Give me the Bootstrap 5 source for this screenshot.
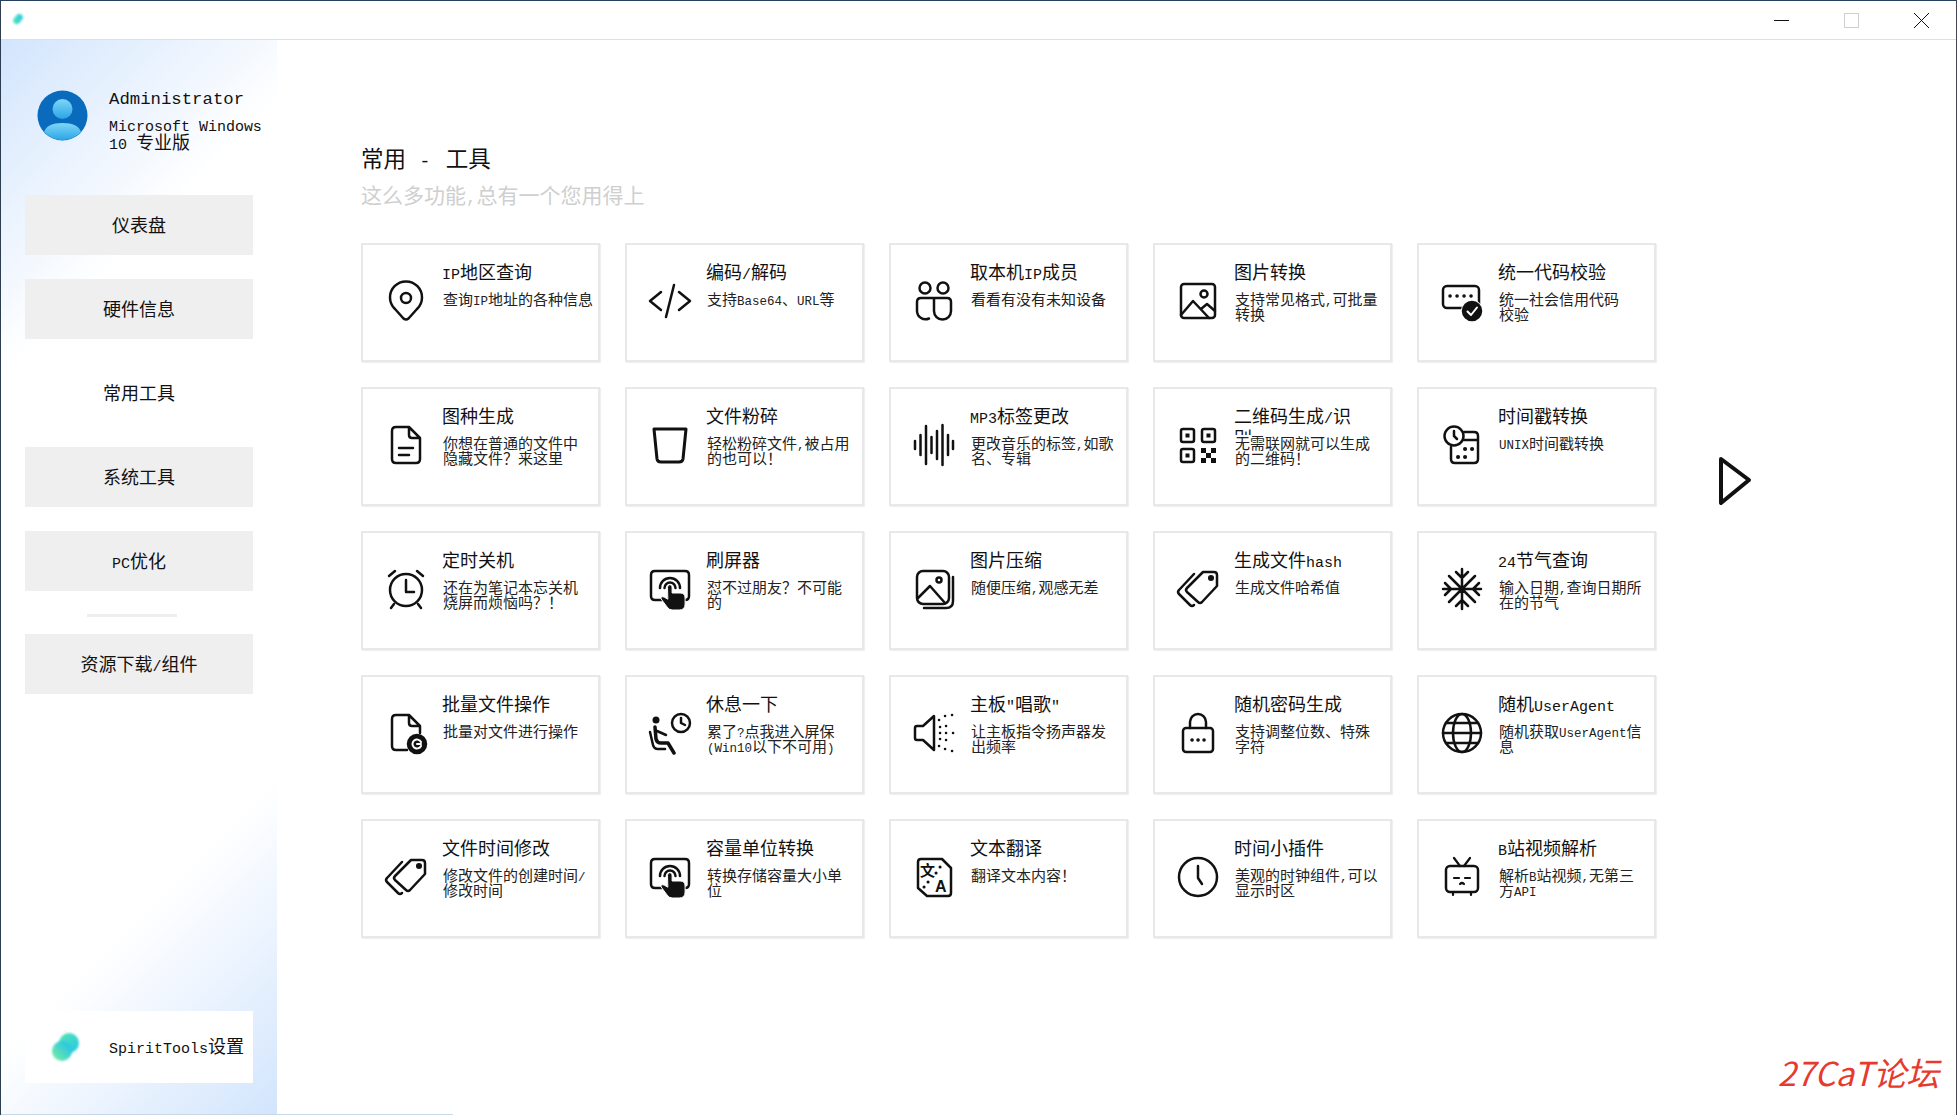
<!DOCTYPE html>
<html lang="zh">
<head>
<meta charset="utf-8">
<title>SpiritTools</title>
<link href="https://cdn.jsdelivr.net/npm/bootstrap@5.3.0/dist/css/bootstrap.min.css" rel="stylesheet">
<style>
html,body{height:1115px;overflow:hidden;background:#fff}
body{font-family:"Noto Sans CJK SC","Liberation Sans",sans-serif;color:#111}
.lat{font-family:"Liberation Mono","Noto Sans CJK SC",monospace;font-size:.833em;line-height:0}
.app-win{height:1115px;border-top:1px solid #24405f;border-left:1px solid #2c3e50;border-right:1px solid #445;position:relative}
.title-strip{height:39px;border-bottom:1px solid #dcdfe4;flex:none}
.strip-logo{margin:11px 0 0 10px}
.win-btn{width:15px;height:15px;display:block}
.win-set{margin:12px 27px 0 0;gap:55px}
.body-row{height:1075px}
.side{width:276px;flex:none;padding:50px 24px 32px;background:linear-gradient(135deg,#d2e5fd 0%,#ffffff 25%,#ffffff 75%,#d2e5fd 100%)}
.profile{height:105px;padding-left:12px;gap:21px}
.profile-name{font-size:20.8px;line-height:22px;margin-top:-6px}
.profile-os{font-size:18px;line-height:18px;margin-top:8px;width:160px}
.side-btn{height:60px;width:228px;border:0;padding:0;background:#efefef;font-size:18px;color:#111;line-height:58px}
.side-btn+.side-btn{margin-top:24px}
.side-btn.on{background:#fff}
.side-rule{width:90px;height:3px;background:#eeeeee;margin:23px 0 17px 62px}
.side-cog{height:72px;width:228px;background:#fff;font-size:18px;margin-top:auto;padding-left:24px;gap:26px}
.cog-label{padding-bottom:4px}
.main-area{padding:102px 0 0 84px}
.page-h{font-size:22.5px;line-height:30px;color:#111;margin:0;white-space:pre;font-weight:400}
.page-h .lat{letter-spacing:2px}
.page-sub{font-size:21px;line-height:28px;color:#cfcfcf;margin:8px 0 35px}
.tool-grid{display:grid;grid-template-columns:repeat(5,239px);grid-auto-rows:119px;gap:25px}
.tool{border:2px solid #e8e8e8;background:#fff;box-shadow:1px 1px 1px #f0f0f0}
.tool-ico{width:44px;height:44px;flex:none;margin:34px 0 0 21px;fill:none;stroke:#111;stroke-width:2.5;stroke-linecap:round;stroke-linejoin:round}
.tool-txt{margin-left:14px;padding-top:15px;min-width:0;flex:1}
.tool-name{font-size:18px;line-height:22px;height:22px;color:#111;white-space:nowrap}
.tool-name.clip-two{height:31px;overflow:hidden;margin-bottom:-9px}
.tool-desc{font-size:15px;line-height:15px;margin-top:9px;padding-left:1px;color:#222;white-space:nowrap}
.next-arrow{margin:213px 0 0 62px;flex:none}
.wm{position:absolute;right:17px;bottom:25px;font-size:33px;line-height:36px;color:#e8392f;font-style:italic}
.bot-line{position:absolute;left:0;bottom:0;width:452px;height:1px;background:#c9d6e4}
</style>
</head>
<body>
<svg width="0" height="0" class="d-block" aria-hidden="true">
<defs>
<linearGradient id="lg1" x1="0" y1="1" x2="1" y2="0"><stop offset="0" stop-color="#7df09a"/><stop offset="1" stop-color="#16bdf5"/></linearGradient>
<linearGradient id="lg2" x1="0" y1="0" x2="1" y2="1"><stop offset="0" stop-color="#55e6b4"/><stop offset="1" stop-color="#25c6e8"/></linearGradient>
<linearGradient id="av" x1="0" y1="0" x2="0" y2="1"><stop offset="0" stop-color="#7fd6f8"/><stop offset="1" stop-color="#2aa5e6"/></linearGradient>
<filter id="soft" x="-30%" y="-30%" width="160%" height="160%"><feGaussianBlur stdDeviation="1"/></filter>
<symbol id="i-tap" viewBox="0 0 44 44">
<path d="M14 33H7Q3 33 3 29V8Q3 4 7 4H37Q41 4 41 8V29Q41 33 37 33"/>
<path d="M12 21A10 10 0 0 1 32 21M16.500 21A5.500 5.500 0 0 1 27.500 21"/>
<path fill="#111" stroke="#fff" stroke-width="1" d="M19.500 20a2.300 2.300 0 0 1 4.600 0v6h8q5 0 5 5v6q0 6-6 6h-7q-3 0-5-3l-6-8q-1-3 3-2l3.400 2z"/>
</symbol>
<symbol id="i-tag" viewBox="0 0 44 44">
<path d="M27 5H38Q41 5 41 8V19L26 35Q24 37 22 35L11 25Q9 23 11 21Z"/>
<path d="M18 7L3 23Q1 25 3 27L14 38Q16 40 18 38"/>
<circle cx="35" cy="11" r="1.800" fill="#111"/>
</symbol>
</defs>
</svg>

<div class="app-win d-flex flex-column">
  <div class="title-strip d-flex justify-content-between">
    <svg class="strip-logo" width="14" height="14" viewBox="0 0 14 14"><rect x="1.500" y="3.500" width="11" height="7" rx="3.500" fill="url(#lg2)" transform="rotate(-50 7 7)" filter="url(#soft)"/></svg>
    <div class="d-flex win-set">
      <svg class="win-btn" viewBox="0 0 15 15"><path d="M0 7.500H15" stroke="#111" fill="none"/></svg>
      <svg class="win-btn" viewBox="0 0 15 15"><rect x=".5" y=".5" width="14" height="14" stroke="#cfcfcf" fill="none"/></svg>
      <svg class="win-btn" viewBox="0 0 15 15"><path d="M0 0L15 15M15 0L0 15" stroke="#111" fill="none"/></svg>
    </div>
  </div>
  <div class="body-row d-flex">
    <aside class="side d-flex flex-column">
      <div class="profile d-flex align-items-start flex-none">
        <svg width="51" height="51" viewBox="0 0 51 51" class="flex-shrink-0">
          <circle cx="25.500" cy="25.500" r="25" fill="#0a6bbd"/>
          <circle cx="25.500" cy="19" r="10" fill="url(#av)"/>
          <path d="M7 42Q10 33 25.500 33Q41 33 44 42A25 25 0 0 1 7 42Z" fill="url(#av)"/>
        </svg>
        <div>
          <div class="profile-name"><span class="lat">Administrator</span></div>
          <div class="profile-os"><span class="lat">Microsoft Windows</span><br><span class="lat">10 </span>专业版</div>
        </div>
      </div>
      <div class="btn rounded-0 side-btn">仪表盘</div>
      <div class="btn rounded-0 side-btn">硬件信息</div>
      <div class="btn rounded-0 side-btn on">常用工具</div>
      <div class="btn rounded-0 side-btn">系统工具</div>
      <div class="btn rounded-0 side-btn"><span class="lat">PC</span>优化</div>
      <div class="side-rule"></div>
      <div class="btn rounded-0 side-btn">资源下载<span class="lat">/</span>组件</div>
      <div class="side-cog d-flex align-items-center">
        <svg width="34" height="34" viewBox="0 0 34 34" class="flex-shrink-0">
          <circle cx="20" cy="13" r="10" fill="url(#lg2)" filter="url(#soft)"/>
          <circle cx="13" cy="21" r="10" fill="url(#lg1)" filter="url(#soft)"/>
        </svg>
        <span class="cog-label"><span class="lat">SpiritTools</span>设置</span>
      </div>
    </aside>
    <main class="main-area flex-grow-1">
      <h1 class="page-h">常用<span class="lat"> - </span>工具</h1>
      <p class="page-sub">这么多功能<span class="lat">,</span>总有一个您用得上</p>
      <div class="d-flex">
        <div class="tool-grid">

          <div class="card rounded-0 flex-row tool">
            <svg class="tool-ico" viewBox="0 0 44 44"><path d="M19.500 39.500L11 30A16 16 0 1 1 33 30L24.500 39.500Q22 41.500 19.500 39.500Z"/><circle cx="22" cy="19" r="5"/></svg>
            <div class="tool-txt"><div class="tool-name"><span class="lat">IP</span>地区查询</div><div class="tool-desc">查询<span class="lat">IP</span>地址的各种信息</div></div>
          </div>
          <div class="card rounded-0 flex-row tool">
            <svg class="tool-ico" viewBox="0 0 44 44"><path d="M13 13L2 22L13 31M31 13L42 22L31 31M26 6L18 38"/></svg>
            <div class="tool-txt"><div class="tool-name">编码<span class="lat">/</span>解码</div><div class="tool-desc">支持<span class="lat">Base64</span>、<span class="lat">URL</span>等</div></div>
          </div>
          <div class="card rounded-0 flex-row tool">
            <svg class="tool-ico" viewBox="0 0 44 44"><circle cx="13" cy="9" r="5.500"/><circle cx="31" cy="9" r="5.500"/><path d="M21 19H9Q5 19 5 23V32A8.500 8.500 0 0 0 17 39.500"/><path d="M22 19H35Q39 19 39 23V32A8.500 8.500 0 0 1 22 32Z"/></svg>
            <div class="tool-txt"><div class="tool-name">取本机<span class="lat">IP</span>成员</div><div class="tool-desc">看看有没有未知设备</div></div>
          </div>
          <div class="card rounded-0 flex-row tool">
            <svg class="tool-ico" viewBox="0 0 44 44"><rect x="5" y="5" width="34" height="34" rx="3"/><circle cx="28" cy="15" r="3.500"/><path d="M5 36L17 22L33 39M25 30L31 25L39 32"/></svg>
            <div class="tool-txt"><div class="tool-name">图片转换</div><div class="tool-desc">支持常见格式<span class="lat">,</span>可批量<br>转换</div></div>
          </div>
          <div class="card rounded-0 flex-row tool">
            <svg class="tool-ico" viewBox="0 0 44 44"><rect x="3" y="7" width="36" height="22" rx="4"/><path d="M10 17h.1M17 17h.1M24 17h.1M31 17h.1" stroke-width="3.500"/><circle cx="32" cy="32" r="11" fill="#fff" stroke="none"/><circle cx="32" cy="32" r="9" fill="#111"/><path d="M27.500 32.500L31 36L37 28.500" stroke="#fff" stroke-width="2"/></svg>
            <div class="tool-txt"><div class="tool-name">统一代码校验</div><div class="tool-desc">统一社会信用代码<br>校验</div></div>
          </div>

          <div class="card rounded-0 flex-row tool">
            <svg class="tool-ico" viewBox="0 0 44 44"><path d="M25 4H12Q8 4 8 8V36Q8 40 12 40H32Q36 40 36 36V15ZM25 4V12Q25 15 28 15H36M15 25H29M15 32H25"/></svg>
            <div class="tool-txt"><div class="tool-name">图种生成</div><div class="tool-desc">你想在普通的文件中<br>隐藏文件？来这里</div></div>
          </div>
          <div class="card rounded-0 flex-row tool">
            <svg class="tool-ico" viewBox="0 0 44 44"><path d="M6 6H38L35 36Q34.500 39 31 39H13Q9.500 39 9 36Z" stroke-width="3"/></svg>
            <div class="tool-txt"><div class="tool-name">文件粉碎</div><div class="tool-desc">轻松粉碎文件<span class="lat">,</span>被占用<br>的也可以！</div></div>
          </div>
          <div class="card rounded-0 flex-row tool">
            <svg class="tool-ico" viewBox="0 0 44 44"><path d="M3 18V26M8.500 12V32M14 3V41M19.500 14V30M25 8V36M30.500 2V42M36 12V32M41 18V26"/></svg>
            <div class="tool-txt"><div class="tool-name"><span class="lat">MP3</span>标签更改</div><div class="tool-desc">更改音乐的标签<span class="lat">,</span>如歌<br>名、专辑</div></div>
          </div>
          <div class="card rounded-0 flex-row tool">
            <svg class="tool-ico" viewBox="0 0 44 44"><rect x="5" y="6" width="13" height="13" rx="2"/><rect x="26" y="6" width="13" height="13" rx="2"/><rect x="5" y="26" width="13" height="13" rx="2"/><g fill="#111" stroke="none"><rect x="9.500" y="10.500" width="4" height="4"/><rect x="30.500" y="10.500" width="4" height="4"/><rect x="9.500" y="30.500" width="4" height="4"/><rect x="25" y="25" width="5" height="5"/><rect x="35" y="25" width="5" height="5"/><rect x="30" y="30" width="5" height="5"/><rect x="25" y="35" width="5" height="5"/><rect x="35" y="35" width="5" height="5"/></g></svg>
            <div class="tool-txt"><div class="tool-name clip-two">二维码生成<span class="lat">/</span>识<br>别</div><div class="tool-desc">无需联网就可以生成<br>的二维码！</div></div>
          </div>
          <div class="card rounded-0 flex-row tool">
            <svg class="tool-ico" viewBox="0 0 44 44"><circle cx="14" cy="13" r="9.500"/><path d="M14 8V13L17 16"/><path d="M24 9H34Q38 9 38 13V36Q38 40 34 40H15Q11 40 11 36V24M24 17H38"/><path d="M25 26h.1M32 26h.1M18 34h.1M25 34h.1" stroke-width="4"/></svg>
            <div class="tool-txt"><div class="tool-name">时间戳转换</div><div class="tool-desc"><span class="lat">UNIX</span>时间戳转换</div></div>
          </div>

          <div class="card rounded-0 flex-row tool">
            <svg class="tool-ico" viewBox="0 0 44 44"><circle cx="22" cy="23" r="16"/><path d="M22 13V25H30M5 9L11 4M39 9L33 4M10 37L7 41M34 37L37 41"/></svg>
            <div class="tool-txt"><div class="tool-name">定时关机</div><div class="tool-desc">还在为笔记本忘关机<br>烧屏而烦恼吗？！</div></div>
          </div>
          <div class="card rounded-0 flex-row tool">
            <svg class="tool-ico"><use href="#i-tap"/></svg>
            <div class="tool-txt"><div class="tool-name">刷屏器</div><div class="tool-desc">怼不过朋友？不可能<br>的</div></div>
          </div>
          <div class="card rounded-0 flex-row tool">
            <svg class="tool-ico" viewBox="0 0 44 44"><rect x="5" y="4" width="32" height="33" rx="6"/><path d="M41 10V34Q41 41 34 41H12"/><circle cx="27" cy="13" r="2.500"/><path d="M6 31L18 19L33 36"/></svg>
            <div class="tool-txt"><div class="tool-name">图片压缩</div><div class="tool-desc">随便压缩<span class="lat">,</span>观感无差</div></div>
          </div>
          <div class="card rounded-0 flex-row tool">
            <svg class="tool-ico"><use href="#i-tag"/></svg>
            <div class="tool-txt"><div class="tool-name">生成文件<span class="lat">hash</span></div><div class="tool-desc">生成文件哈希值</div></div>
          </div>
          <div class="card rounded-0 flex-row tool">
            <svg class="tool-ico" viewBox="0 0 44 44"><path d="M22 2V42M3 22H41M9 9L35 35M35 9L9 35M16 5L22 11L28 5M16 39L22 33L28 39M5 16L11 22L5 28M39 16L33 22L39 28"/></svg>
            <div class="tool-txt"><div class="tool-name"><span class="lat">24</span>节气查询</div><div class="tool-desc">输入日期<span class="lat">,</span>查询日期所<br>在的节气</div></div>
          </div>

          <div class="card rounded-0 flex-row tool">
            <svg class="tool-ico" viewBox="0 0 44 44"><path d="M23 39H12Q8 39 8 35V8Q8 4 12 4H25L36 15V22M25 4V12Q25 15 28 15H36"/><circle cx="33" cy="33" r="9" fill="#111"/><path d="M37 31A4.500 4.500 0 1 0 37 35M33 33H37" stroke="#fff" stroke-width="2"/></svg>
            <div class="tool-txt"><div class="tool-name">批量文件操作</div><div class="tool-desc">批量对文件进行操作</div></div>
          </div>
          <div class="card rounded-0 flex-row tool">
            <svg class="tool-ico" viewBox="0 0 44 44"><circle cx="8" cy="9" r="3.500" fill="#111" stroke="none"/><path d="M7 16L8 28Q9 32 13 32H20L26 42" stroke-width="3.500"/><path d="M2 21L5 34Q6 38 10 38H17M9 20L18 24"/><circle cx="33" cy="12" r="9"/><path d="M33 7V12L37 14"/></svg>
            <div class="tool-txt"><div class="tool-name">休息一下</div><div class="tool-desc">累了<span class="lat">?</span>点我进入屏保<br><span class="lat">(Win10</span>以下不可用<span class="lat">)</span></div></div>
          </div>
          <div class="card rounded-0 flex-row tool">
            <svg class="tool-ico" viewBox="0 0 44 44"><path d="M3 17Q3 15 5 15H11L22 5V39L11 29H5Q3 29 3 27Z"/><path d="M27 9h.1M33 5h.1M40 4h.1M28 16h.1M34 15h.1M28 22h.1M34 22h.1M41 22h.1M28 28h.1M34 29h.1M27 35h.1M33 38h.1M40 40h.1" stroke-width="2.500"/></svg>
            <div class="tool-txt"><div class="tool-name">主板<span class="lat">"</span>唱歌<span class="lat">"</span></div><div class="tool-desc">让主板指令扬声器发<br>出频率</div></div>
          </div>
          <div class="card rounded-0 flex-row tool">
            <svg class="tool-ico" viewBox="0 0 44 44"><rect x="7" y="17" width="30" height="24" rx="3"/><path d="M14 17V11A8 8 0 0 1 30 11V17"/><path d="M16 29h.1M22 29h.1M28 29h.1" stroke-width="3.500"/></svg>
            <div class="tool-txt"><div class="tool-name">随机密码生成</div><div class="tool-desc">支持调整位数、特殊<br>字符</div></div>
          </div>
          <div class="card rounded-0 flex-row tool">
            <svg class="tool-ico" viewBox="0 0 44 44"><circle cx="22" cy="22" r="19"/><ellipse cx="22" cy="22" rx="9" ry="19"/><path d="M3 22H41M6 12H38M6 32H38"/></svg>
            <div class="tool-txt"><div class="tool-name">随机<span class="lat">UserAgent</span></div><div class="tool-desc">随机获取<span class="lat">UserAgent</span>信<br>息</div></div>
          </div>

          <div class="card rounded-0 flex-row tool">
            <svg class="tool-ico"><use href="#i-tag"/></svg>
            <div class="tool-txt"><div class="tool-name">文件时间修改</div><div class="tool-desc">修改文件的创建时间<span class="lat">/</span><br>修改时间</div></div>
          </div>
          <div class="card rounded-0 flex-row tool">
            <svg class="tool-ico"><use href="#i-tap"/></svg>
            <div class="tool-txt"><div class="tool-name">容量单位转换</div><div class="tool-desc">转换存储容量大小单<br>位</div></div>
          </div>
          <div class="card rounded-0 flex-row tool">
            <svg class="tool-ico" viewBox="0 0 44 44"><path d="M9 4H30L39 13V38Q39 41 36 41H15L6 33V7Q6 4 9 4Z"/><text x="8" y="21" font-size="15" font-weight="700" fill="#111" stroke="none" font-family="Noto Sans CJK SC">文</text><text x="23" y="37" font-size="16" font-weight="700" fill="#111" stroke="none" font-family="Liberation Sans">A</text><path d="M28 12h.1M24 18h.1M16 27h.1M12 32h.1" stroke-width="3"/></svg>
            <div class="tool-txt"><div class="tool-name">文本翻译</div><div class="tool-desc">翻译文本内容！</div></div>
          </div>
          <div class="card rounded-0 flex-row tool">
            <svg class="tool-ico" viewBox="0 0 44 44"><circle cx="22" cy="22" r="19"/><path d="M22 11V23L26 29"/></svg>
            <div class="tool-txt"><div class="tool-name">时间小插件</div><div class="tool-desc">美观的时钟组件<span class="lat">,</span>可以<br>显示时区</div></div>
          </div>
          <div class="card rounded-0 flex-row tool">
            <svg class="tool-ico" viewBox="0 0 44 44"><rect x="6" y="11" width="32" height="26" rx="4"/><path d="M14 3L20 11M30 3L24 11M13 37V40M31 37V40M14 23H19M25 23H30M20 29Q22 27 24 29" stroke-width="2.200"/></svg>
            <div class="tool-txt"><div class="tool-name"><span class="lat">B</span>站视频解析</div><div class="tool-desc">解析<span class="lat">B</span>站视频<span class="lat">,</span>无第三<br>方<span class="lat">API</span></div></div>
          </div>

        </div>
        <svg class="next-arrow" width="36" height="50" viewBox="0 0 36 50"><path d="M3 3L31 24L3 47Z" fill="none" stroke="#111" stroke-width="4" stroke-linejoin="round"/></svg>
      </div>
    </main>
  </div>
  <div class="wm">27CaT论坛</div>
  <div class="bot-line"></div>
</div>
<script src="https://cdn.jsdelivr.net/npm/bootstrap@5.3.0/dist/js/bootstrap.bundle.min.js"></script>
</body>
</html>
